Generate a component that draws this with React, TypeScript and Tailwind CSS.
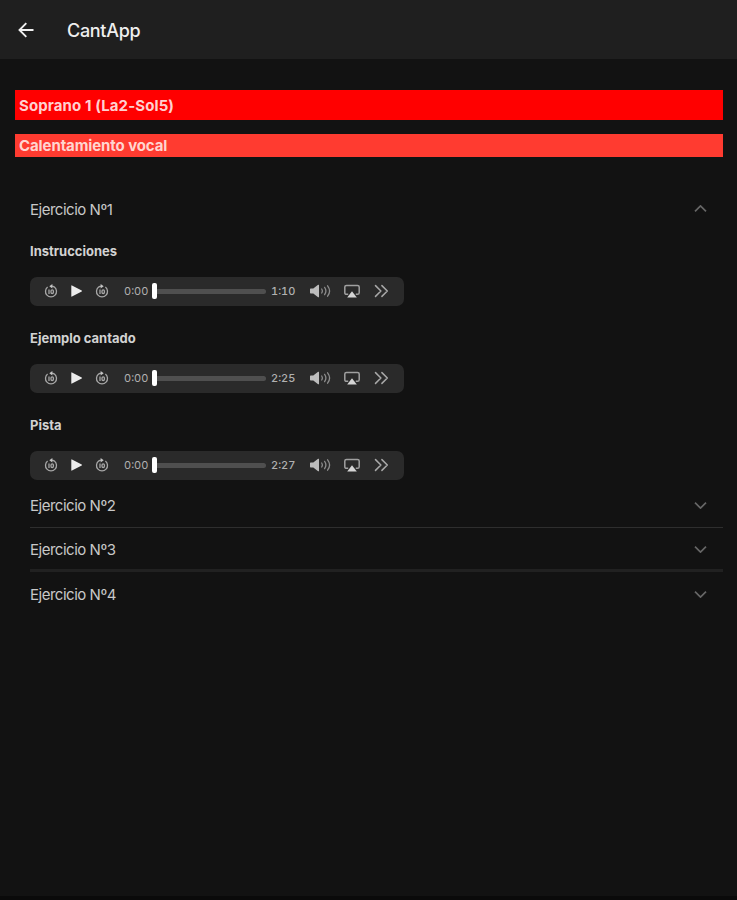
import { useState } from 'react'

interface Track {
  title: string
  duration: string
}

interface Exercise {
  name: string
  tracks: Track[]
}

const exercises: Exercise[] = [
  {
    name: 'Ejercicio Nº1',
    tracks: [
      { title: 'Instrucciones', duration: '1:10' },
      { title: 'Ejemplo cantado', duration: '2:25' },
      { title: 'Pista', duration: '2:27' },
    ],
  },
  { name: 'Ejercicio Nº2', tracks: [] },
  { name: 'Ejercicio Nº3', tracks: [] },
  { name: 'Ejercicio Nº4', tracks: [] },
]

function SkipIcon({ forward = false }: { forward?: boolean }) {
  return (
    <svg className="h-[14px] w-[14px] shrink-0" viewBox="0 0 14 14" fill="none" stroke="#a8a8a8" strokeWidth="1.3">
      <g transform={forward ? 'matrix(-1 0 0 1 14 0)' : undefined}>
        <path d="M3.6 3.1A5.5 5.5 0 1 0 10.4 3.1Q9.2 2.3 7.5 2.2" />
        <path d="M8.4 0 5.3 2.2l3.1 2.3z" fill="#c4c4c4" stroke="none" />
      </g>
      <path d="M5 5.5v4.4" />
      <rect x="7" y="5.9" width="2.4" height="3.6" rx="1.2" />
    </svg>
  )
}

function AudioPlayer({ duration }: { duration: string }) {
  return (
    <div className="flex h-[29px] w-[374px] items-center rounded-[7px] bg-[#2a2a2a] pb-[1px] pl-[14px] text-[11px] text-[#b0b0b0]">
      <SkipIcon />
      <svg className="ml-[12px] h-[12px] w-[13px] shrink-0" viewBox="0 0 13 12" fill="#ececec">
        <path d="M1.3.7Q1.3 0 2 .4l9.7 5.1q.7.5 0 1L2 11.6Q1.3 12 1.3 11.3z" />
      </svg>
      <div className="ml-[12px] flex">
        <SkipIcon forward />
      </div>
      <span className="ml-[15px] w-[25px] shrink-0 pt-[1px] tabular-nums">0:00</span>
      <div className="ml-[3px] flex w-[114px] shrink-0 items-center">
        <div className="h-[16px] w-[5px] shrink-0 rounded-[2px] bg-white" />
        <div className="h-[5px] grow rounded-r-full bg-[#4f4f4f]" />
      </div>
      <span className="ml-[5px] w-[26px] shrink-0 pt-[1px] font-medium tabular-nums">{duration}</span>
      <svg className="ml-[12px] h-[14px] w-[23px] shrink-0" viewBox="0 0 23 14" fill="none" stroke="#8c8c8c" strokeWidth="1.3" strokeLinecap="round">
        <path d="M1 5.2q0-.7.7-.7h2.6L9.1.8q.9-.5.9.5v11.4q0 1-.9.5L4.3 9.500H1.7Q1 9.500 1 8.800z" fill="#bcbcbc" stroke="none" />
        <path d="M12.700 5q1.300 2 0 4M15.600 3.400q2.600 3.600 0 7.200M18.600 1.800q4 5.200 0 10.400" />
      </svg>
      <svg className="ml-[12px] h-[14px] w-[16px] shrink-0" viewBox="0 0 16 14" fill="none" stroke="#a0a0a0" strokeWidth="1.5">
        <path d="M4.2 10.3H2.5Q.8 10.3.8 8.7V3.1q0-1.6 1.7-1.6h11q1.7 0 1.7 1.6v5.6q0 1.6-1.7 1.6h-1.7" />
        <path d="m8 7.2 4.8 6.300H3.200z" fill="#d4d4d4" stroke="none" />
      </svg>
      <svg className="ml-[14px] h-[14px] w-[15px] shrink-0" viewBox="0 0 15 14" fill="none" stroke="#a8a8a8" strokeWidth="1.5" strokeLinecap="round" strokeLinejoin="round">
        <path d="m1.500 1.600 5.400 5.400-5.400 5.400M7.900 1.600 13.300 7l-5.400 5.400" />
      </svg>
    </div>
  )
}

function Chevron({ open }: { open: boolean }) {
  return (
    <svg className={`h-[7px] w-[13px] ${open ? 'mb-[2px]' : ''}`} viewBox="0 0 13 7" fill="none" stroke="#666666" strokeWidth="1.7">
      <path d={open ? 'M1 6.300 6.500.9 12 6.300' : 'M1 .7 6.500 6.100 12 .7'} />
    </svg>
  )
}

const rowBorders = ['', 'border-b border-[#2e2e2e]', 'border-b-[3px] border-[#212121] pt-[2px]', '']

export default function App() {
  const [openIndex, setOpenIndex] = useState(0)

  return (
    <div className="flex h-[900px] w-[737px] flex-col border-b-4 border-[#0a0a0a] bg-[#121212] font-['Inter',sans-serif]">
      {/* Toolbar */}
      <header className="flex h-[59px] shrink-0 items-center bg-[#1f1f1f] pl-[18px]">
        <button aria-label="Volver">
          <svg className="h-[16px] w-[16px]" viewBox="0 0 16 16" fill="none" stroke="#f0f0f0" strokeWidth="1.9">
            <path d="M15.500 8H2M8.300 1.200 1.500 8l6.800 6.800" />
          </svg>
        </button>
        <h1 className="ml-[33px] pt-[2px] text-[18px] font-medium tracking-[-0.3px] text-[#efefef]">CantApp</h1>
      </header>

      <main className="pl-[15px] pr-[14px] pt-[31px]">
        <h2 className="flex h-[30px] items-center bg-[#ff0000] pl-[4px] pt-[2px] text-[15px] font-bold tracking-[0.1px] text-[#ffd0d0]">
          Soprano 1 (La2-Sol5)
        </h2>
        <h3 className="mt-[14px] flex h-[23px] items-center bg-[#ff3b30] pl-[4px] pt-[1px] text-[15px] font-bold tracking-[-0.1px] text-[#ffd5d0]">
          Calentamiento vocal
        </h3>

        {/* Exercises */}
        <div className="mt-[30px] pl-[15px]">
          {exercises.map((exercise, i) => {
            const open = i === openIndex
            return (
              <section key={exercise.name}>
                <button
                  onClick={() => setOpenIndex(open ? -1 : i)}
                  className={`flex h-[44px] w-full items-center justify-between pr-[16px] text-[15px] text-[#c8c8c8] ${open ? '' : rowBorders[i]}`}
                >
                  <span className="pt-[2px] tracking-[-0.48px]">{exercise.name}</span>
                  <Chevron open={open} />
                </button>
                {open && (
                  <div>
                    {exercise.tracks.map((track) => (
                      <div key={track.title} className="h-[87px] last:h-[79px]">
                        <h4 className="flex h-[39px] items-center pt-[2px] text-[13px] font-bold text-[#d2d2d2]">{track.title}</h4>
                        <div className="pt-[7px]">
                          <AudioPlayer duration={track.duration} />
                        </div>
                      </div>
                    ))}
                  </div>
                )}
              </section>
            )
          })}
        </div>
      </main>
    </div>
  )
}
